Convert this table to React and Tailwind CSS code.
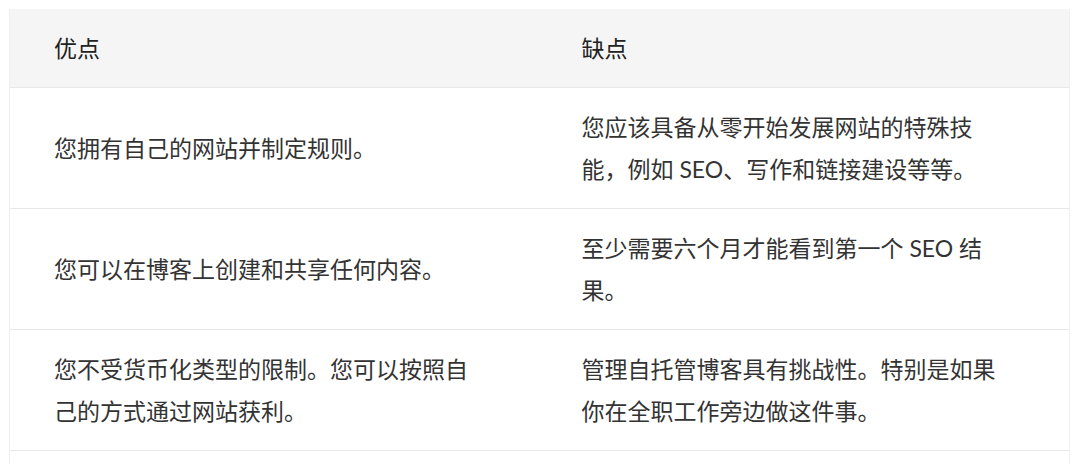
const rows = [
  ["您拥有自己的网站并制定规则。", "您应该具备从零开始发展网站的特殊技能，例如 SEO、写作和链接建设等等。"],
  ["您可以在博客上创建和共享任何内容。", "至少需要六个月才能看到第一个 SEO 结果。"],
  ["您不受货币化类型的限制。您可以按照自己的方式通过网站获利。", "管理自托管博客具有挑战性。特别是如果你在全职工作旁边做这件事。"],
];

const Cell = ({ children, head, right }) => (
  <div
    className={`flex items-center py-[18px] pr-[50px] ${right ? "pl-[42px]" : "pl-[44px]"} ${
      head ? "text-[#222]" : "text-[#333]"
    }`}
  >
    <p className="max-w-[428px] leading-[42px]">{children}</p>
  </div>
);

const App = () => {
  return (
    <div
      className="min-h-[464px] bg-white pt-[9px] pl-[9px] pr-[12px] text-[23px]"
      style={{ fontFamily: '"Lato", "Noto Sans CJK SC", sans-serif' }}
    >
      <div className="border-l border-r border-[#f0f0f0]">
        <div className="grid grid-cols-2 bg-[#f5f5f5] border-b border-[#e8e8e8]">
          <Cell head>优点</Cell>
          <Cell head right>缺点</Cell>
        </div>
        {rows.map((r, i) => (
          <div key={i} className="grid grid-cols-2 border-b border-[#e8e8e8]">
            <Cell>{r[0]}</Cell>
            <Cell right>{r[1]}</Cell>
          </div>
        ))}
        <div className="h-[20px]" />
      </div>
    </div>
  );
};

export default App;
